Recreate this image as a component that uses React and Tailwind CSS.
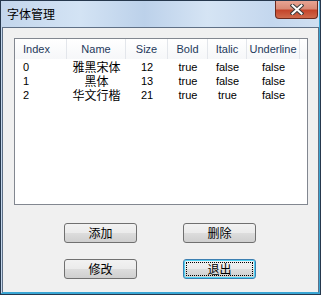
import React from "react";

const cols = [
  { key: "Index", w: 52, align: "left" },
  { key: "Name", w: 59 },
  { key: "Size", w: 42 },
  { key: "Bold", w: 40 },
  { key: "Italic", w: 39 },
  { key: "Underline", w: 53 },
];

const rows = [
  ["0", "雅黑宋体", "12", "true", "false", "false"],
  ["1", "黑体", "13", "true", "false", "false"],
  ["2", "华文行楷", "21", "true", "true", "false"],
];

const latin = { fontFamily: '"Liberation Sans", "Noto Sans CJK SC", sans-serif' };
const cjk = { fontFamily: '"Noto Sans CJK SC", sans-serif' };

function Btn({ label, focused }) {
  return (
    <div
      className={
        "relative h-[20px] w-[73px] rounded-[3px] border flex items-center justify-center text-[12px] leading-none text-black bg-[linear-gradient(180deg,#f2f2f2_0%,#ebebeb_50%,#dddddd_51%,#cfcfcf_100%)] " +
        (focused
          ? "border-[#3c7fb1] shadow-[inset_0_0_0_1px_#4fd3f5]"
          : "border-[#707070]")
      }
      style={cjk}
    >
      {focused && (
        <div className="absolute inset-[2px] border border-dotted border-black" />
      )}
      <span className="relative">{label}</span>
    </div>
  );
}

export default function App() {
  return (
    <div className="w-[321px] h-[295px] bg-[#26384d] p-px flex flex-col">
      <div className="flex-1 flex flex-col border-r border-b border-[#3aa6d4] pl-px bg-[linear-gradient(90deg,#c3d6ec,#d3e3f4_25%,#bcd1ea_45%,#d5e4f4_65%,#c4d7ee_85%,#cfdff1)]">
        <div className="h-[26px] flex justify-between shrink-0">
          <div className="pl-[5px] pt-[5px] text-[12px] leading-[16px] text-black" style={cjk}>
            字体管理
          </div>
          <div className="mr-px h-[18px] w-[43px] rounded-b-[4px] border border-t-0 border-[#6b2a1e] bg-[linear-gradient(180deg,#e8a493_0%,#d98a76_45%,#c4452b_55%,#cf6a4c_100%)] flex items-center justify-center">
            <svg width="14" height="11" viewBox="0 0 14 11">
              <path d="M2.5 1.5 L11.5 9.5 M11.5 1.5 L2.5 9.5" stroke="#3b3b3b" strokeWidth="4" strokeLinecap="square" />
              <path d="M2.5 1.5 L11.5 9.5 M11.5 1.5 L2.5 9.5" stroke="#ffffff" strokeWidth="2" strokeLinecap="square" />
            </svg>
          </div>
        </div>
        <div className="flex-1 border border-[#5f7086] border-b-[#3aa6d4] bg-[#f0f0f0] flex flex-col">
          <div className="ml-[11px] mt-[10px] w-[294px] h-[167px] border border-[#828790] bg-white flex flex-col">
            <div className="h-[20px] flex bg-[linear-gradient(180deg,#ffffff,#f6f7f9)]" style={latin}>
              {cols.map((c) => (
                <div
                  key={c.key}
                  className={
                    "h-full flex items-center border-r border-[#e3e6eb] text-[11px] text-[#1e395b] " +
                    (c.align === "left" ? "pl-[8px] justify-start" : "justify-center")
                  }
                  style={{ width: c.w }}
                >
                  {c.key}
                </div>
              ))}
            </div>
            <div className="pt-px">
              {rows.map((r, i) => (
                <div key={i} className="h-[14px] flex items-center">
                  {r.map((v, j) => (
                    <div
                      key={j}
                      className={
                        "leading-[14px] text-black " +
                        (j === 1 ? "text-[12px] " : "text-[11px] ") +
                        (j === 0 ? "pl-[8px] text-left" : "text-center")
                      }
                      style={{ width: cols[j].w, ...(j === 1 ? cjk : latin) }}
                    >
                      {v}
                    </div>
                  ))}
                </div>
              ))}
            </div>
          </div>
          <div className="ml-[61px] mt-[18px] grid grid-cols-[73px_73px] gap-x-[46px] gap-y-[16px]">
            <Btn label="添加" />
            <Btn label="删除" />
            <Btn label="修改" />
            <Btn label="退出" focused />
          </div>
        </div>
      </div>
    </div>
  );
}
